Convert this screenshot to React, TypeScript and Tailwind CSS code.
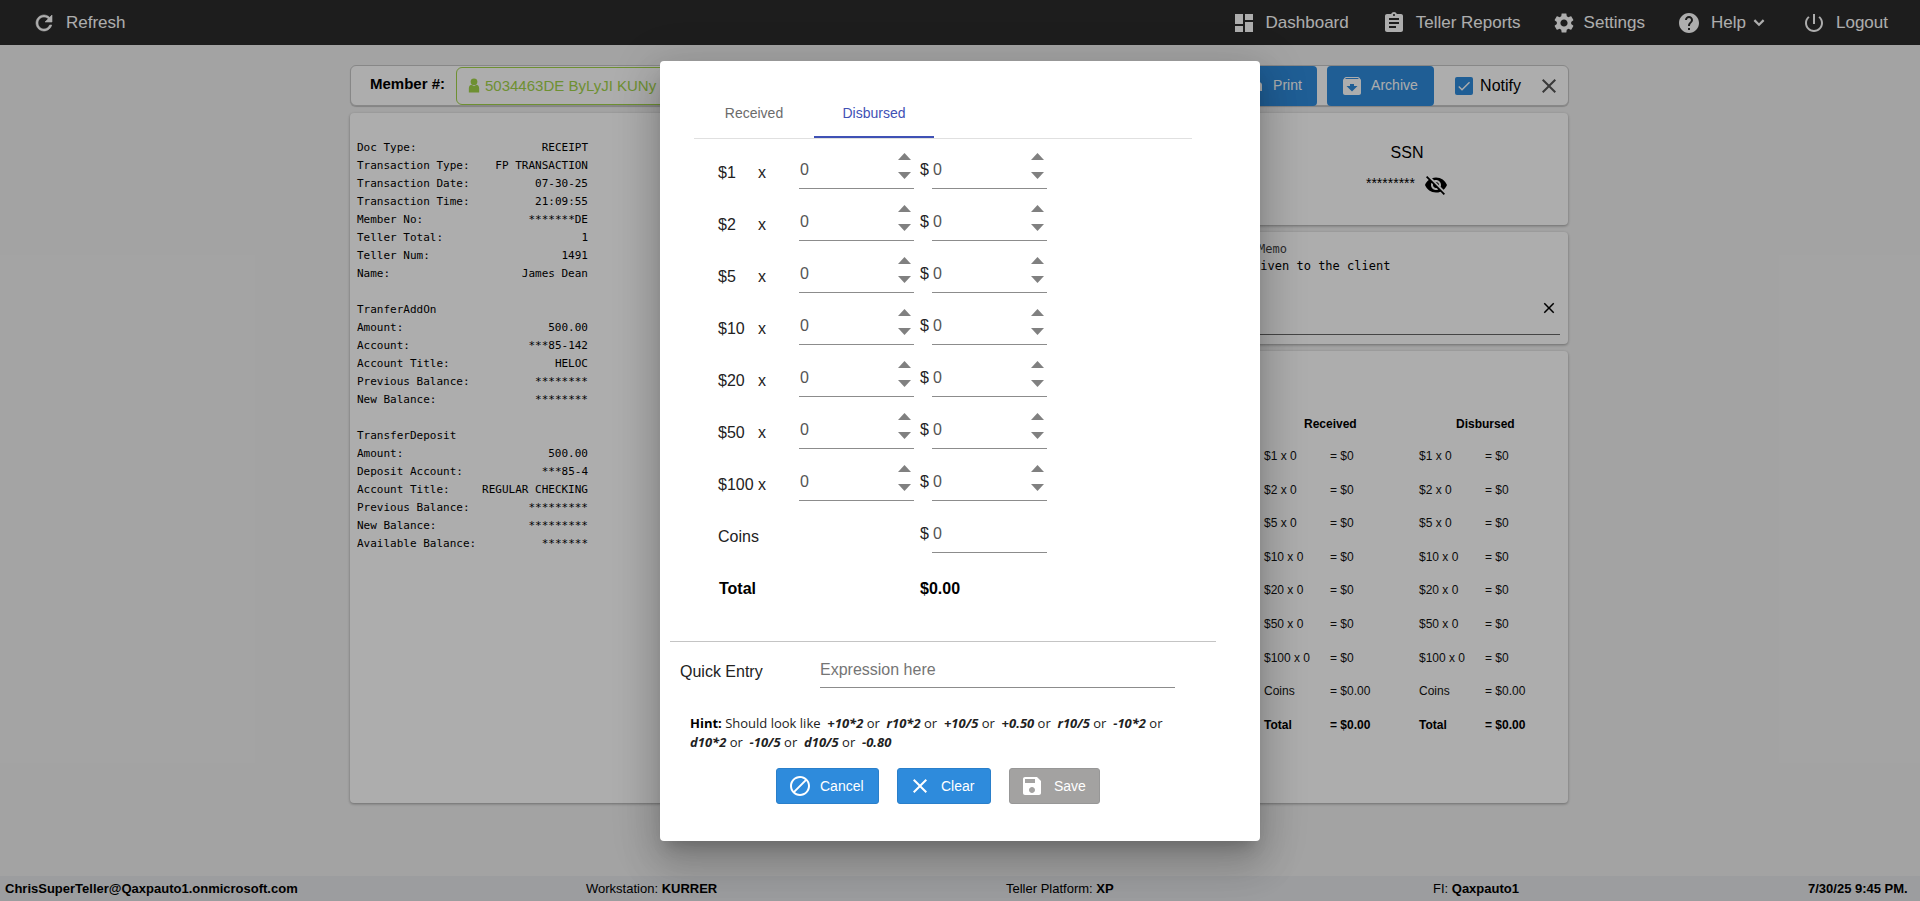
import React from "react";

const P = {
  refresh: "M17.65 6.35C16.2 4.9 14.21 4 12 4c-4.42 0-7.99 3.58-7.99 8s3.57 8 7.99 8c3.73 0 6.84-2.55 7.73-6h-2.08c-.82 2.33-3.04 4-5.65 4-3.31 0-6-2.69-6-6s2.69-6 6-6c1.66 0 3.14.69 4.22 1.78L13 11h7V4l-2.35 2.35z",
  dashboard: "M3 13h8V3H3v10zm0 8h8v-6H3v6zm10 0h8V11h-8v10zm0-18v6h8V3h-8z",
  assignment: "M19 3h-4.18C14.4 1.84 13.3 1 12 1c-1.3 0-2.4.84-2.82 2H5c-1.1 0-2 .9-2 2v14c0 1.1.9 2 2 2h14c1.1 0 2-.9 2-2V5c0-1.1-.9-2-2-2zm-7 0c.55 0 1 .45 1 1s-.45 1-1 1-1-.45-1-1 .45-1 1-1zm2 14H7v-2h7v2zm3-4H7v-2h10v2zm0-4H7V7h10v2z",
  settings: "M19.14 12.94c.04-.3.06-.61.06-.94 0-.32-.02-.64-.07-.94l2.03-1.58c.18-.14.23-.41.12-.61l-1.92-3.32c-.12-.22-.37-.29-.59-.22l-2.39.96c-.5-.38-1.03-.7-1.62-.94l-.36-2.54c-.04-.24-.24-.41-.48-.41h-3.84c-.24 0-.43.17-.47.41l-.36 2.54c-.59.24-1.13.57-1.62.94l-2.39-.96c-.22-.08-.47 0-.59.22L2.74 8.87c-.12.21-.08.47.12.61l2.03 1.58c-.05.3-.09.63-.09.94s.02.64.07.94l-2.03 1.58c-.18.14-.23.41-.12.61l1.92 3.32c.12.22.37.29.59.22l2.39-.96c.5.38 1.03.7 1.62.94l.36 2.54c.05.24.24.41.48.41h3.84c.24 0 .44-.17.47-.41l.36-2.54c.59-.24 1.13-.56 1.62-.94l2.39.96c.22.08.47 0 .59-.22l1.92-3.32c.12-.22.07-.47-.12-.61l-2.01-1.58zM12 15.6c-1.98 0-3.6-1.62-3.6-3.6s1.62-3.6 3.6-3.6 3.6 1.62 3.6 3.6-1.62 3.6-3.6 3.6z",
  help: "M12 2C6.48 2 2 6.48 2 12s4.48 10 10 10 10-4.48 10-10S17.52 2 12 2zm1 17h-2v-2h2v2zm2.07-7.75l-.9.92C13.45 12.9 13 13.5 13 15h-2v-.5c0-1.1.45-2.1 1.17-2.83l1.24-1.26c.37-.36.59-.86.59-1.41 0-1.1-.9-2-2-2s-2 .9-2 2H8c0-2.21 1.79-4 4-4s4 1.79 4 4c0 .88-.36 1.68-.93 2.25z",
  chevron: "M7.41 7.59L12 12.17l4.59-4.58L18.5 9.5 12 16 5.5 9.5z",
  power: "M13 3h-2v10h2V3zm4.83 2.17l-1.42 1.42C17.99 7.86 19 9.81 19 12c0 3.87-3.13 7-7 7s-7-3.13-7-7c0-2.19 1.01-4.14 2.58-5.42L6.17 5.17C4.23 6.82 3 9.26 3 12c0 4.97 4.03 9 9 9s9-4.03 9-9c0-2.74-1.23-5.18-3.17-6.83z",
  block: "M12 2C6.48 2 2 6.48 2 12s4.48 10 10 10 10-4.48 10-10S17.52 2 12 2zM4 12c0-4.42 3.58-8 8-8 1.85 0 3.55.63 4.9 1.69L5.69 16.9C4.63 15.55 4 13.85 4 12zm8 8c-1.85 0-3.55-.63-4.9-1.69L18.31 7.1C19.37 8.45 20 10.15 20 12c0 4.42-3.58 8-8 8z",
  close: "M19 6.41L17.59 5 12 10.59 6.41 5 5 6.41 10.59 12 5 17.59 6.41 19 12 13.41 17.59 19 19 17.59 13.41 12z",
  save: "M17 3H5c-1.11 0-2 .9-2 2v14c0 1.1.89 2 2 2h14c1.1 0 2-.9 2-2V7l-4-4zm-5 16c-1.66 0-3-1.34-3-3s1.34-3 3-3 3 1.34 3 3-1.34 3-3 3zm3-10H5V5h10v4z",
  archive: "M20.54 5.23l-1.39-1.68C18.88 3.21 18.47 3 18 3H6c-.47 0-.88.21-1.16.55L3.46 5.23C3.17 5.57 3 6.02 3 6.5V19c0 1.1.9 2 2 2h14c1.1 0 2-.9 2-2V6.5c0-.48-.17-.93-.46-1.27zM12 17.5L6.5 12H10v-2h4v2h3.5L12 17.5zM5.12 5l.81-1h12l.94 1H5.12z",
  print: "M19 8H5c-1.66 0-3 1.34-3 3v6h4v4h12v-4h4v-6c0-1.66-1.34-3-3-3zm-3 11H8v-5h8v5zm3-7c-.55 0-1-.45-1-1s.45-1 1-1 1 .45 1 1-.45 1-1 1zm-1-9H6v4h12V3z",
  eyeOff: "M12 7c2.76 0 5 2.24 5 5 0 .65-.13 1.26-.36 1.83l2.92 2.92c1.51-1.26 2.7-2.89 3.43-4.75-1.73-4.39-6-7.5-11-7.5-1.4 0-2.74.25-3.98.7l2.16 2.16C10.74 7.13 11.35 7 12 7zM2 4.27l2.28 2.28.46.46C3.08 8.3 1.78 10.02 1 12c1.73 4.39 6 7.5 11 7.5 1.55 0 3.03-.3 4.38-.84l.42.42L19.73 22 21 20.73 3.27 3 2 4.27zM7.53 9.8l1.55 1.55c-.05.21-.08.43-.08.65 0 1.66 1.34 3 3 3 .22 0 .44-.03.65-.08l1.55 1.55c-.67.33-1.41.53-2.2.53-2.76 0-5-2.24-5-5 0-.79.2-1.53.53-2.2zm4.31-.78l3.15 3.15.02-.16c0-1.66-1.34-3-3-3l-.17.01z",
  check: "M9 16.17L4.83 12l-1.42 1.41L9 19 21 7l-1.41-1.41z",
};

function Icon({ d, className }: { d: string; className?: string }) {
  return (
    <svg viewBox="0 0 24 24" className={className} fill="currentColor">
      <path d={d} />
    </svg>
  );
}

function NavItem({ d, label, cls }: { d: string; label: string; cls: string }) {
  return (
    <div className={`flex items-center gap-[10px] ${cls}`}>
      <Icon d={d} className="w-6 h-6" />
      <span className="text-[17px]">{label}</span>
    </div>
  );
}

const receipt: ([string, string] | null)[] = [
  ["Doc Type:", "RECEIPT"],
  ["Transaction Type:", "FP TRANSACTION"],
  ["Transaction Date:", "07-30-25"],
  ["Transaction Time:", "21:09:55"],
  ["Member No:", "*******DE"],
  ["Teller Total:", "1"],
  ["Teller Num:", "1491"],
  ["Name:", "James Dean"],
  null,
  ["TranferAddOn", ""],
  ["Amount:", "500.00"],
  ["Account:", "***85-142"],
  ["Account Title:", "HELOC"],
  ["Previous Balance:", "********"],
  ["New Balance:", "********"],
  null,
  ["TransferDeposit", ""],
  ["Amount:", "500.00"],
  ["Deposit Account:", "***85-4"],
  ["Account Title:", "REGULAR CHECKING"],
  ["Previous Balance:", "*********"],
  ["New Balance:", "*********"],
  ["Available Balance:", "*******"],
];

const denoms = ["$1", "$2", "$5", "$10", "$20", "$50", "$100"];

function Stepper() {
  return (
    <div className="flex flex-col gap-[12px] mt-[14px] mr-[3px]">
      <svg width="13" height="7" viewBox="0 0 13 7" className="text-[#808080]" fill="currentColor">
        <polygon points="6.5,0 13,7 0,7" />
      </svg>
      <svg width="13" height="7" viewBox="0 0 13 7" className="text-[#808080]" fill="currentColor">
        <polygon points="0,0 13,0 6.5,7" />
      </svg>
    </div>
  );
}

function NumInput({ step = true }: { step?: boolean }) {
  return (
    <div className="w-[115px] h-[50px] border-b border-[#8c8c8c] flex justify-between items-start">
      <span className="mt-[21px] ml-[1px] leading-[20px] text-[16px] text-[#555]">0</span>
      {step && <Stepper />}
    </div>
  );
}

function Btn({ d, label, cls, iconCls }: { d: string; label: string; cls: string; iconCls?: string }) {
  return (
    <div className={`h-[36px] rounded-[3px] flex items-center text-white text-[14px] ${cls}`}>
      <Icon d={d} className={iconCls ?? "w-6 h-6"} />
      <span>{label}</span>
    </div>
  );
}

function Tok({ children, lead = true }: { children: React.ReactNode; lead?: boolean }) {
  return <b className="italic font-bold">{lead ? "\u00a0" : ""}{children}</b>;
}

function SummaryCol({ title, headCls }: { title: string; headCls: string }) {
  const rows = denoms.map((x) => [`${x} x 0`, "= $0"]);
  return (
    <div className="w-[155px] shrink-0">
      <div className={`font-bold h-[32px] leading-[16px] ${headCls}`}>{title}</div>
      {rows.map(([a, b]) => (
        <div key={a} className="flex h-[33.6px] leading-[16px] text-[#111]">
          <span className="w-[66px]">{a}</span>
          <span>{b}</span>
        </div>
      ))}
      <div className="flex h-[33.6px] leading-[16px] text-[#111]">
        <span className="w-[66px]">Coins</span>
        <span>= $0.00</span>
      </div>
      <div className="flex h-[33.6px] leading-[16px] font-bold">
        <span className="w-[66px]">Total</span>
        <span>= $0.00</span>
      </div>
    </div>
  );
}

export default function App() {
  const card = "bg-white rounded-[4px] shadow-[0_1px_3px_rgba(0,0,0,0.35)]";
  return (
    <div className="relative h-[901px] overflow-hidden flex flex-col bg-[#f1f1f1] text-black font-['Liberation_Sans',Arial,sans-serif]">
      {/* top bar */}
      <header className="h-[45px] shrink-0 bg-[#2c2c2c] text-white flex items-center">
        <div className="flex items-center gap-[10px] ml-[32px]">
          <svg viewBox="0 0 24 24" className="w-6 h-6" fill="currentColor" stroke="currentColor" strokeWidth="0.6">
            <path d={P.refresh} />
          </svg>
          <span className="text-[17px]">Refresh</span>
        </div>
        <div className="ml-auto flex items-center pr-[32px]">
          <NavItem d={P.dashboard} label="Dashboard" cls="" />
          <NavItem d={P.assignment} label="Teller Reports" cls="ml-[33px]" />
          <div className="flex items-center gap-[8px] ml-[31px]">
            <Icon d={P.settings} className="w-6 h-6" />
            <span className="text-[17px]">Settings</span>
          </div>
          <div className="flex items-center gap-[10px] ml-[32px]">
            <Icon d={P.help} className="w-6 h-6" />
            <span className="text-[17px]">Help</span>
          </div>
          <Icon d={P.chevron} className="w-[20px] h-[20px] ml-[3px]" />
          <NavItem d={P.power} label="Logout" cls="ml-[33px]" />
        </div>
      </header>

      {/* page */}
      <main className="flex-1 min-h-0 pt-[20px] pl-[350px] pr-[352px]">
        <div className="h-[41px] -mr-[1px] bg-white rounded-[6px] border border-[#c8c8c8] shadow-[0_1px_1px_rgba(0,0,0,0.2)] flex items-center">
          <span className="ml-[19px] font-bold text-[15px] -mt-[2px] w-[86px] shrink-0">Member #:</span>
          <div className="h-[38px] w-[300px] border border-[#a3d44a] rounded-[6px] flex items-center pl-[11px] gap-[5px] text-[#a3d44a] text-[15px]">
            <svg viewBox="0 0 12 16" className="w-[12px] h-[15px]" fill="currentColor">
              <circle cx="6" cy="4" r="3.6" />
              <path d="M0.5 15.5V11c0-2.6 1.7-3.8 3-3.8l2.5 1.5 2.5-1.5c1.3 0 3 1.2 3 3.8v4.5z" />
            </svg>
            <span className="mt-[2px]">5034463DE ByLyJI KUNy</span>
          </div>
          <div className="ml-auto flex items-center h-[40px]">
            <Btn d={P.print} label="Print" cls="bg-[#2e8bdc] h-[40px] w-[110px] rounded-[4px] pl-[33px] gap-[9px]" />
            <Btn d={P.archive} label="Archive" cls="bg-[#2e8bdc] h-[40px] w-[107px] rounded-[4px] ml-[10px] pl-[13px] gap-[7px]" />
            <div className="ml-[21px] w-[18px] h-[18px] rounded-[2px] bg-[#2e8bdc] text-white flex items-center justify-center">
              <Icon d={P.check} className="w-[16px] h-[16px]" />
            </div>
            <span className="ml-[7px] text-[16px]">Notify</span>
            <Icon d={P.close} className="w-[24px] h-[24px] ml-[16px] mr-[7px] text-[#555]" />
          </div>
        </div>

        <div className="flex gap-[8px] mt-[7px] h-[690px]">
          <section className={`${card} w-[850px] shrink-0 pt-[26px] pl-[7px] font-['DejaVu_Sans_Mono',monospace] text-[11px] leading-[18px]`}>
            <div className="w-[231px]">
              {receipt.map((r, i) =>
                r ? (
                  <div key={i} className="flex justify-between h-[18px]">
                    <span>{r[0]}</span>
                    <span>{r[1]}</span>
                  </div>
                ) : (
                  <div key={i} className="h-[18px]" />
                )
              )}
            </div>
          </section>

          <div className="w-[360px] shrink-0 flex flex-col gap-[7px]">
            <section className={`${card} h-[112px] flex flex-col items-center pl-[38px] pt-[30px]`}>
              <div className="text-[16px] leading-[20px]">SSN</div>
              <div className="flex items-center mt-[10px] gap-[9px]">
                <span className="text-[14px] leading-[16px] -mt-[4px]">*********</span>
                <Icon d={P.eyeOff} className="w-6 h-6" />
              </div>
            </section>

            <section className={`${card} h-[112px] pl-[9px] pr-[8px] font-['DejaVu_Sans_Mono',monospace]`}>
              <div className="pl-[41px] pt-[10px] text-[12px] leading-[14px] text-[#444]">Memo</div>
              <div className="text-[12px] leading-[16px] mt-[2px]">Cash given to the client</div>
              <div className="h-[59px] mt-[2px] border-b border-[#666] flex justify-end items-center pt-[6px]">
                <Icon d={P.close} className="w-[18px] h-[18px] mr-[2px]" />
              </div>
            </section>

            <section className={`${card} flex-1 pl-[56px] pt-[65px] text-[12px] flex`}>
              <SummaryCol title="Received" headCls="pl-[40px]" />
              <SummaryCol title="Disbursed" headCls="pl-[37px]" />
            </section>
          </div>
        </div>
      </main>

      {/* footer */}
      <footer className="h-[25px] shrink-0 bg-[#e6e7ea] flex items-center text-[13px] whitespace-nowrap">
        <b className="ml-[5px] w-[293px]">ChrisSuperTeller@Qaxpauto1.onmicrosoft.com</b>
        <span className="ml-[288px] w-[132px]">Workstation: <b>KURRER</b></span>
        <span className="ml-[288px] w-[108px]">Teller Platform: <b>XP</b></span>
        <span className="ml-[319px] w-[85px]">FI: <b>Qaxpauto1</b></span>
        <b className="ml-[290px]">7/30/25 9:45 PM.</b>
      </footer>

      {/* overlay + dialog */}
      <div className="absolute inset-0 bg-black/32 flex justify-center pt-[61px]">
        <div className="w-[600px] h-[780px] bg-white rounded-[4px] shadow-[0_11px_15px_-7px_rgba(0,0,0,0.2),0_24px_38px_3px_rgba(0,0,0,0.14),0_9px_46px_8px_rgba(0,0,0,0.12)] flex flex-col">
          <div className="ml-[34px] w-[498px] mt-[29px] h-[49px] border-b border-[#e0e0e0] flex text-[14px]">
            <div className="w-[120px] h-[48px] pb-[1px] flex items-center justify-center text-[#6b6b6b]">Received</div>
            <div className="w-[120px] h-[48px] flex items-center justify-center text-[#3f51b5] border-b-2 border-[#3f51b5]">Disbursed</div>
          </div>

          <div className="pl-[58px] text-[16px] text-[#222]">
            {denoms.map((d) => (
              <div key={d} className="h-[52px] flex items-start">
                <span className="w-[40px] mt-[24px] leading-[20px]">{d}</span>
                <span className="w-[41px] mt-[24px] leading-[20px]">x</span>
                <NumInput />
                <span className="ml-[6px] w-[12px] mt-[21px] leading-[20px]">$</span>
                <NumInput />
              </div>
            ))}
            <div className="h-[52px] flex items-start">
              <span className="w-[202px] mt-[24px] leading-[20px]">Coins</span>
              <span className="w-[12px] mt-[21px] leading-[20px]">$</span>
              <NumInput step={false} />
            </div>
            <div className="h-[86px] flex items-start font-bold text-black">
              <span className="w-[202px] mt-[24px] leading-[20px] ml-[1px]">Total</span>
              <span className="mt-[24px] leading-[20px] -ml-[1px]">$0.00</span>
            </div>
          </div>

          <div className="ml-[10px] w-[546px] h-[1px] bg-[#c4c4c4]" />

          <div className="flex items-start h-[46px] text-[16px]">
            <span className="ml-[20px] w-[140px] mt-[20px] leading-[20px] text-[#222]">Quick Entry</span>
            <div className="w-[355px] h-[46px] border-b border-[#8c8c8c] pt-[18px] leading-[20px] text-[#757575]">Expression here</div>
          </div>

          <div className="ml-[30px] w-[490px] mt-[26px] font-['Open_Sans',sans-serif] text-[13px] leading-[19px] text-[#222]">
            <b className="text-black">Hint:</b> Should look like <Tok>+10*2</Tok> or <Tok>r10*2</Tok> or <Tok>+10/5</Tok> or <Tok>+0.50</Tok> or <Tok>r10/5</Tok> or <Tok>-10*2</Tok> or <Tok lead={false}>d10*2</Tok> or <Tok>-10/5</Tok> or <Tok>d10/5</Tok> or <Tok>-0.80</Tok>
          </div>

          <div className="flex ml-[116px] mt-[16px]">
            <Btn d={P.block} label="Cancel" cls="bg-[#2e8bdc] w-[103px] pl-[11px] gap-[8px] border border-[#2a7fca]" />
            <Btn d={P.close} label="Clear" cls="bg-[#2e8bdc] w-[94px] ml-[18px] pl-[10px] gap-[9px] border border-[#2a7fca]" />
            <Btn d={P.save} label="Save" cls="bg-[#a3a2a1] w-[91px] ml-[18px] pl-[10px] gap-[10px] border border-[#979797] text-[#eeeeee]" />
          </div>
        </div>
      </div>
    </div>
  );
}
